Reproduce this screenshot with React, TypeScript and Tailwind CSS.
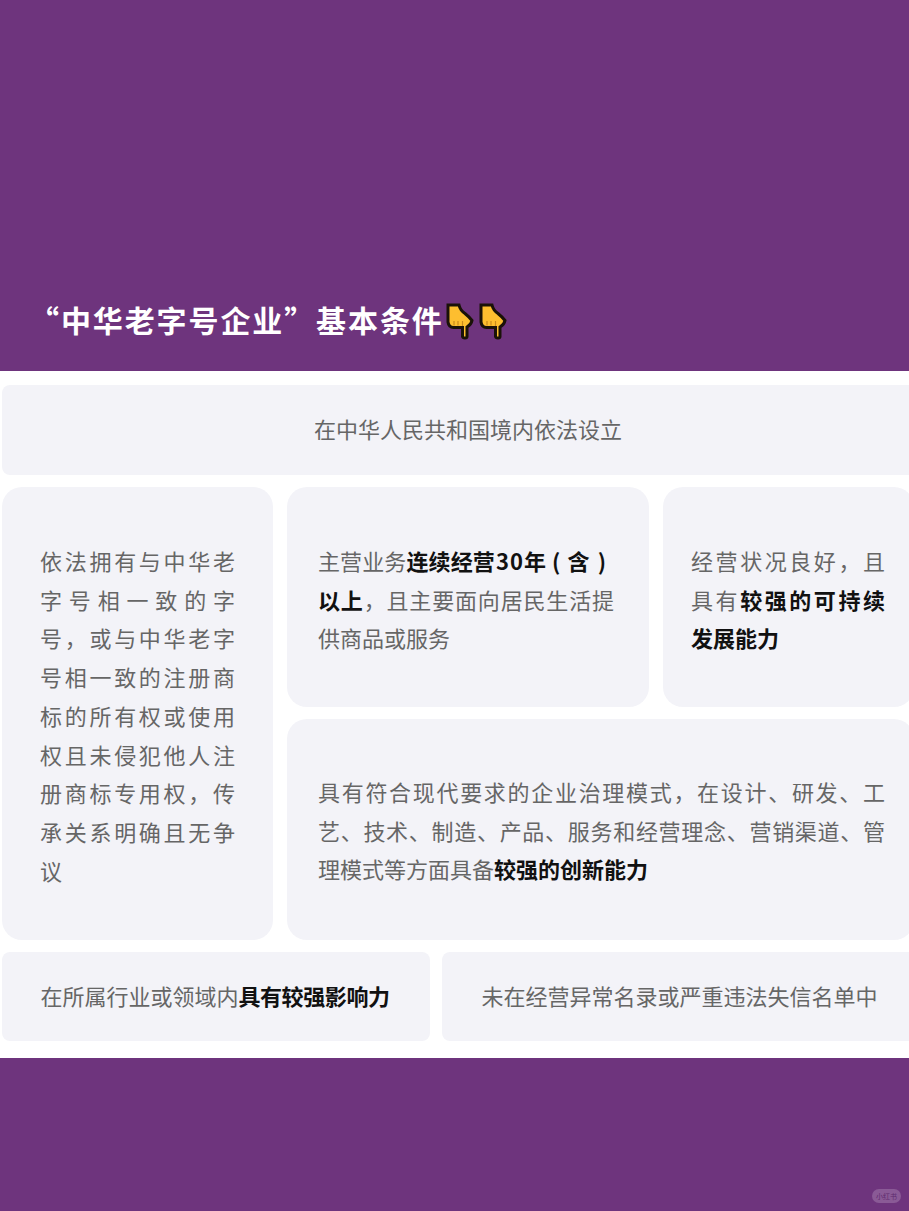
function Hand() {
  return (
    <svg width="28" height="37" viewBox="0 0 28 37" className="shrink-0">
      <path
        d="M2 2 H13 C14 6.5 16 8.5 19 10.5 C21.5 12.5 24 15 26 17.5 C25.5 20.5 23.5 22.5 21 24 V33.5 C21 35.5 17 35.5 16.5 33.5 V24.5 H7.5 C4 24.5 2.5 22.5 2 19 Z"
        fill="#fdbe2f"
        stroke="#1a1208"
        strokeWidth="3"
        strokeLinejoin="miter"
      />
      <path d="M16.5 23 V18 M12 22.5 V18 M8 22.5 V18" stroke="#c98a1c" strokeWidth="1.2" fill="none" />
    </svg>
  );
}

function B({ children }: { children: React.ReactNode }) {
  return <strong className="font-bold text-[#111111]">{children}</strong>;
}

export default function App() {
  return (
    <div className="flex h-[1211px] w-[909px] flex-col overflow-hidden bg-[#6e347d] font-['Noto_Sans_CJK_SC',sans-serif]">
      <div className="flex h-[371px] shrink-0 items-end pb-[31px] pl-[29px]">
        <h1 className="flex items-center text-[30px] leading-[36px] font-bold tracking-[1.9px] whitespace-nowrap text-white">
          “中华老字号企业”基本条件
          <span className="mt-[6px] ml-[2px] flex gap-[5px]">
            <Hand />
            <Hand />
          </span>
        </h1>
      </div>

      <div className="h-[687px] shrink-0 overflow-hidden bg-white pt-[14px] pl-[2px]">
        <div className="flex w-[936px] flex-col gap-[12px] text-[22px] leading-[38.7px] text-[#666666]">
          <div className="flex h-[90px] w-[932px] items-center justify-center rounded-[8px] bg-[#f3f3f8] pb-[4px]">
            在中华人民共和国境内依法设立
          </div>

          <div className="flex gap-[14px]">
            <div className="h-[453px] w-[271px] shrink-0 rounded-[20px] bg-[#f3f3f8] pt-[54px] pr-[38px] pl-[38px] text-justify">
              依法拥有与中华老字号相一致的字号，或与中华老字号相一致的注册商标的所有权或使用权且未侵犯他人注册商标专用权，传承关系明确且无争议
            </div>
            <div className="flex w-[627px] shrink-0 flex-col gap-[12px]">
              <div className="flex gap-[14px]">
                <div className="h-[220px] w-[362px] shrink-0 rounded-[20px] bg-[#f3f3f8] pt-[54px] pr-[35px] pl-[31px] text-justify">
                  主营业务
                  <B>
                    连续经营<span className="ml-[1px] tracking-[1px]">30</span>年<span className="mr-[7px] ml-[6px]">(</span>含<span className="mr-[8px] ml-[8px]">)</span>以上
                  </B>
                  ，且主要面向居民生活提供商品或服务
                </div>
                <div className="h-[220px] w-[251px] shrink-0 rounded-[20px] bg-[#f3f3f8] pt-[54px] pr-[29px] pl-[28px] text-justify">
                  经营状况良好，且具有<B>较强的可持续发展能力</B>
                </div>
              </div>
              <div className="h-[221px] rounded-[20px] bg-[#f3f3f8] pt-[53px] pr-[29px] pl-[31px] text-justify">
                具有符合现代要求的企业治理模式，在设计、研发、工艺、技术、制造、产品、服务和经营理念、营销渠道、管理模式等方面具备<B>较强的创新能力</B>
              </div>
            </div>
          </div>

          <div className="flex gap-[12px]">
            <div className="flex h-[89px] w-[428px] shrink-0 items-center justify-center rounded-[8px] bg-[#f3f3f8] pr-[2px] pb-[2px]">
              <span>
                在所属行业或领域内
                <strong className="font-bold tracking-[-0.4px] text-[#111111]">具有较强影响力</strong>
              </span>
            </div>
            <div className="flex h-[89px] w-[475px] shrink-0 items-center justify-center rounded-[8px] bg-[#f3f3f8] pb-[2px]">
              未在经营异常名录或严重违法失信名单中
            </div>
          </div>
        </div>
      </div>

      <div className="flex flex-1 items-end justify-end pr-[8px] pb-[8px]">
        <div className="flex h-[14px] w-[29px] items-center justify-center rounded-full bg-[#8a5a96] text-[7px] leading-none text-[#5f2a6e]">
          小红书
        </div>
      </div>
    </div>
  );
}
